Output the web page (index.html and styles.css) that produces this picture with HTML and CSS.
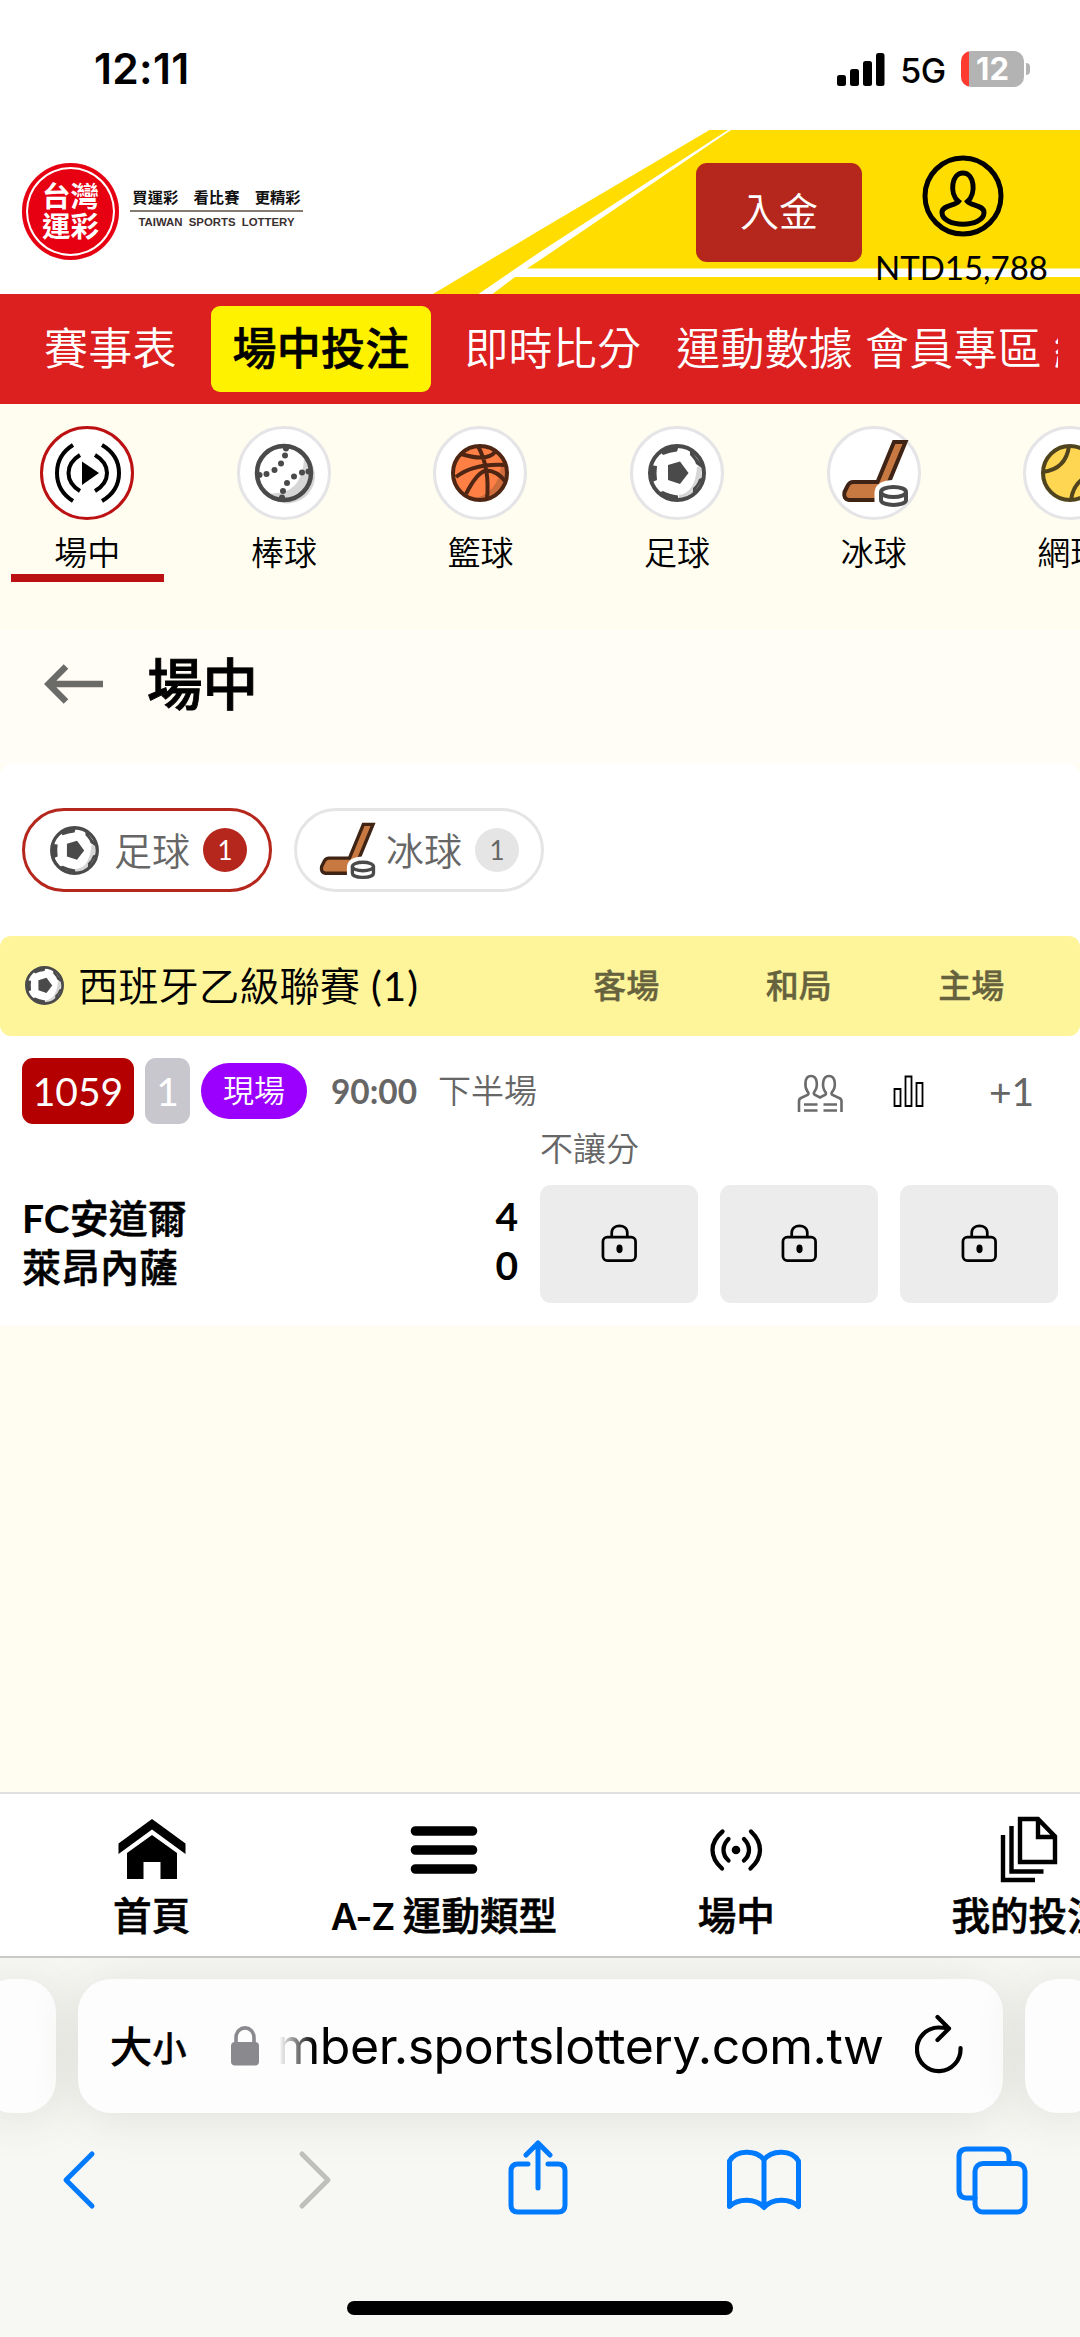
FILE: index.html
```html
<!DOCTYPE html>
<html lang="zh-Hant">
<head>
<meta charset="utf-8">
<title>台灣運彩</title>
<link rel="stylesheet" href="styles.css">
</head>
<body>
<svg class="defs" width="0" height="0" aria-hidden="true">
  <symbol id="soccer" viewBox="-35 -35 70 70">
    <circle r="27" fill="#fff"/>
    <path d="M24 6A25 25 0 0 1 2 25L2 22Q18 20 20 -6L25 -8Z" fill="#d6d6d6"/>
    <g fill="#4a4a4a">
      <path d="M-9 -8L3 -11.5L11.5 0L3 11L-9 7Z"/>
      <path d="M-28 -8L-20 -7Q-21 0 -20 7L-27 10Z"/>
      <path d="M-17 -22L-14 -18Q-7 -21 0 -21.5L2 -28Z"/>
      <path d="M13 -24L13 -18Q18 -13 19 -9L25 -5L28 -4Z"/>
      <path d="M27 4L22 6Q20 12 16 15L16 20L13 26Z"/>
      <path d="M-19 20L-14 18Q-8 21 1 22.5L1 28Z"/>
    </g>
    <circle r="27" fill="none" stroke="#4a4a4a" stroke-width="4"/>
  </symbol>
  <symbol id="baseball" viewBox="-35 -35 70 70">
    <circle r="27" fill="#fff"/>
    <path d="M25-14A27 27 0 0 1-18 20Q18 24 20-14Z" fill="#d6d6d6"/>
    <g fill="#4a4a4a">
      <circle cx="2" cy="-24.500" r="3"/><circle cx="1" cy="-17.500" r="3"/><circle cx="-3" cy="-9.500" r="3"/><circle cx="-9.500" cy="-3" r="3"/><circle cx="-17.500" cy="1" r="3"/><circle cx="-24.500" cy="2" r="3"/>
      <circle cx="-2" cy="24.500" r="3"/><circle cx="-1" cy="18" r="3"/><circle cx="3" cy="10" r="3"/><circle cx="10" cy="3.500" r="3"/><circle cx="18" cy="-.5" r="3"/><circle cx="24.500" cy="-1.500" r="3"/>
    </g>
    <circle r="27" fill="none" stroke="#4a4a4a" stroke-width="4.500"/>
  </symbol>
  <symbol id="basketball" viewBox="-35 -35 70 70">
    <circle r="27" fill="#ff7f45"/>
    <path d="M26-7A27 27 0 0 1-7 26Q18 20 21-7Z" fill="#cf6d3c"/>
    <g fill="none" stroke="#4f2613" stroke-width="4">
      <path d="M-2-27C6-12 9 6 7 26M-24 4Q-6-10 26-8M-19-19Q7-11 15-21M-14 21C-8 9 0-2 7-2.500Q17-2 25 8"/>
      <circle r="27"/>
    </g>
  </symbol>
  <symbol id="hockey" viewBox="-35 -35 70 70">
    <path d="M20-31H31.500L15 9V27H-25Q-31 26-29.500 19L-26 12Q-24 9-21 9H3.500Z" fill="#c87941" stroke="#3f2415" stroke-width="4"/>
    <path d="M.5 30V19Q2 7 20 7L27 12V28Z" fill="#fff"/>
    <path d="M7 19V27C7 33.500 32 33.500 32 27V19" fill="#fff" stroke="#4a4a4a" stroke-width="4"/>
    <ellipse cx="19.500" cy="19" rx="12.500" ry="5" fill="#fff" stroke="#4a4a4a" stroke-width="4"/>
  </symbol>
  <symbol id="tennis" viewBox="-35 -35 70 70">
    <circle r="27" fill="#ffd651"/>
    <path d="M-1-27Q-4-4-27-1M27 1Q4 4 1 27" fill="none" stroke="#4f441d" stroke-width="4"/>
    <circle r="27" fill="none" stroke="#4f441d" stroke-width="4"/>
  </symbol>
  <symbol id="lock" viewBox="0 0 38 40">
    <g fill="none" stroke="#000" stroke-width="2.800"><rect x="2" y="14.500" width="33.500" height="24" rx="4.500"/><path d="M11 14V10C11 .5 27 .5 27 10V14"/></g>
    <ellipse cx="19" cy="26.500" rx="3.200" ry="4.500"/>
  </symbol>
</svg>

<div class="status">
  <time class="clock">12:11</time>
  <svg class="signal" width="48" height="33" viewBox="0 0 48 33"><rect y="22" width="9" height="11" rx="2.500"/><rect x="13" y="16" width="9" height="17" rx="2.500"/><rect x="26" y="8" width="9" height="25" rx="2.500"/><rect x="39" width="8.500" height="33" rx="2.500"/></svg>
  <span class="net">5G</span>
  <span class="battery">12</span><i class="nub"></i>
</div>

<header class="top">
  <svg class="stripes" width="1080" height="164" viewBox="0 0 1080 164">
    <path d="M709.500 0H1080V164H433L540 100Z" fill="#ffdd00"/>
    <path d="M728 0H731L540 130 527 138.500H1080V147H515L492.500 164H478.500L540 122Z" fill="#fff"/>
  </svg>
  <div class="seal"><span>台灣</span><span>運彩</span></div>
  <div class="tagline"><b>買運彩　看比賽　更精彩</b><em>TAIWAN SPORTS LOTTERY</em></div>
  <a class="deposit">入金</a>
  <div class="account">
    <svg width="84" height="84" viewBox="-42 -42 84 84" fill="none" stroke="#000" stroke-width="5"><circle r="38"/><path d="M-4.500 5.500C-14-2-11.500-23 0-23S13.500-2 4.500 5.500C8 10 21 9 21 16.500C21 32-21 32-21 16.500C-21 9-8 10-4.500 5.500Z"/></svg>
    <span>NTD15,788</span>
  </div>
</header>

<nav class="menu">
  <div class="menu-row"><a>賽事表</a><a class="on">場中投注</a><a class="gap">即時比分</a><a class="gap2">運動數據</a><a class="near">會員專區</a><a class="near">線上</a></div>
</nav>

<div class="sports">
  <a class="on"><span class="disc"><svg width="70" height="70" viewBox="-35 -35 70 70" fill="none" stroke="#000" stroke-width="4"><path d="M-14-28Q-30-18-30 0T-14 28M-7-18Q-18.500-11-18.500 0T-7 18M8-18Q20-11 20 0T8 18M15-28Q32-18 32 0T15 28"/><path d="M-5-11.500 12 0-5 12Z" fill="#000" stroke="none"/></svg></span>場中</a>
  <a><span class="disc"><svg width="70" height="70"><use href="#baseball"/></svg></span>棒球</a>
  <a><span class="disc"><svg width="70" height="70"><use href="#basketball"/></svg></span>籃球</a>
  <a><span class="disc"><svg width="70" height="70"><use href="#soccer"/></svg></span>足球</a>
  <a><span class="disc"><svg width="70" height="70"><use href="#hockey"/></svg></span>冰球</a>
  <a><span class="disc"><svg width="70" height="70"><use href="#tennis"/></svg></span>網球</a>
</div>

<div class="heading">
  <svg width="60" height="40" viewBox="0 0 60 40" fill="none" stroke="#6b6b67" stroke-width="6.500"><path d="M22 2.500 4.500 20 22 37.500M5 20H59"/></svg>
  <h1>場中</h1>
</div>

<main>
  <div class="pills">
    <a class="pill on"><svg width="59" height="59"><use href="#soccer"/></svg><span>足球</span><b>1</b></a>
    <a class="pill"><svg width="59" height="59"><use href="#hockey"/></svg><span>冰球</span><b>1</b></a>
  </div>
  <div class="league">
    <svg width="47" height="47"><use href="#soccer"/></svg>
    <h2>西班牙乙級聯賽 <span>(1)</span></h2>
    <div class="cols"><span>客場</span><span>和局</span><span>主場</span></div>
  </div>
  <div class="info">
    <span class="code">1059</span><span class="min">1</span><span class="live">現場</span>
    <b class="time">90:00</b><span class="half">下半場</span>
    <svg class="people" width="46" height="39" viewBox="0 0 46 39" fill="none" stroke="#6b6b6b" stroke-width="2.600"><path d="M2 38V27Q2 24.500 5 23.500L10.500 21Q12.500 19.500 10.500 17.500C7.500 13 7 2 14 2S21 13 17.500 17.500Q16 19.500 18 21L23 23.500 28 21Q30 19.500 28 17.500C25 13 25 2 32 2S39 13 35.500 17.500Q33.500 19.500 35.500 21L41 23.500Q44.500 24.500 44.500 27V38M7 30.500H20.500M7 36.500H20.500M26.500 30.500H40M26.500 36.500H40"/></svg>
    <svg class="stats" width="31" height="33" viewBox="0 0 31 33" fill="none" stroke="#000" stroke-width="1.800"><path d="M1.500 14H7.500V31H1.500ZM12.500 1.500H18.500V31H12.500ZM23.500 8H29.500V31H23.500Z"/></svg>
    <span class="more">+1</span>
  </div>
  <div class="match">
    <div class="teams">
      <p><span><b>FC</b>安道爾</span><b>4</b></p>
      <p><span>萊昂內薩</span><b>0</b></p>
    </div>
    <div class="market">
      <span>不讓分</span>
      <div class="odds"><i><svg width="37" height="39"><use href="#lock"/></svg></i><i><svg width="37" height="39"><use href="#lock"/></svg></i><i><svg width="37" height="39"><use href="#lock"/></svg></i></div>
    </div>
  </div>
</main>

<footer class="tabs">
  <a><svg width="68" height="70" viewBox="-34 -35 68 70"><path d="M-33.500-6.500 0-31 33.500-6.500V4L0-20.500-33.500 4Z"/><path d="M-25 3 0-15 25 3V29H8.500V12H-8.500V29H-25Z"/></svg>首頁</a>
  <a><svg width="68" height="70" viewBox="-34 -35 68 70"><path d="M-28.500-19H28.500M-28.500 0H28.500M-28.500 19H28.500" stroke="#000" stroke-width="9.600" stroke-linecap="round"/></svg><span><b>A-Z</b> 運動類型</span></a>
  <a><svg width="68" height="70" viewBox="-34 -35 68 70" fill="none" stroke="#000" stroke-width="4.300" stroke-linecap="round"><circle r="4.300" fill="#000" stroke="none"/><path d="M-13.500-18.500Q-23.500-10-23.500 0T-14 18.500M-7.500-11Q-12.500-6-12.500 0T-7.500 10.500M8-11Q13-6 13 0T8 10.500M15-18.500Q24-10 24 0T14.500 18.500"/></svg>場中</a>
  <a><svg width="68" height="70" viewBox="-34 -35 68 70" fill="none" stroke="#000" stroke-width="4.400"><path d="M-9-31H9L26-13.500V12H-9ZM9-31V-13H26M-17.500-24V21.500H14.500M-26-15V30H6"/></svg>我的投注</a>
</footer>

<section class="browser">
  <div class="bars">
    <div class="bar side"></div>
    <div class="bar address">
      <span class="big">大</span><span class="small">小</span>
      <svg class="padlock" width="28" height="40" viewBox="0 0 28 40"><rect y="16" width="28" height="23.500" rx="4" fill="#8a898e"/><path d="M5 18V12C5-1.500 23-1.500 23 12V18" fill="none" stroke="#8a898e" stroke-width="3.600"/></svg>
      <span class="url">mber.sportslottery.com.tw</span>
      <svg class="reload" width="48" height="60" viewBox="0 0 48 60" fill="none" stroke="#000" stroke-width="4.200" stroke-linecap="round" stroke-linejoin="round"><path d="M45.500 34A21.800 21.800 0 1 1 23.500 13.500Q28 13.500 34 14.500M22.500 3 34 14.500 22.500 26"/></svg>
    </div>
    <div class="bar side"></div>
  </div>
  <div class="tools">
    <svg width="80" height="80" viewBox="-40 -40 80 80"><path d="M13-26-13 0 13 26"/></svg>
    <svg class="forward" width="80" height="80" viewBox="-40 -40 80 80"><path d="M-13-26 13 0-13 26"/></svg>
    <svg class="share" width="80" height="80" viewBox="-40 -40 80 80"><path d="M-10-16H-20Q-27-16-27-9V25Q-27 32-20 32H20Q27 32 27 25V-9Q27-16 20-16H10M0 8V-36M-12-25 0-37 12-25"/></svg>
    <svg width="80" height="80" viewBox="-40 -40 80 80"><path d="M0-20C-8-31-28-30-34.500-19V26.500C-26 18-8 18 0 27.500C8 18 26 18 34.500 26.500V-19C28-30 8-31 0-20V27"/></svg>
    <svg width="80" height="80" viewBox="-40 -40 80 80"><path d="M-17 18H-25Q-33 18-33 10V-23Q-33-31-25-31H9Q17-31 17-23V-17"/><rect x="-17" y="-16.500" width="50" height="48.500" rx="8"/></svg>
  </div>
  <div class="home"></div>
</section>
</body>
</html>
```
FILE: styles.css
```css
* { box-sizing: border-box; }
html, body { margin: 0; }
body {
  width: 1080px; height: 2337px; overflow: hidden;
  display: flex; flex-direction: column;
  background: #fffdf1; color: #000;
  font-family: Lato, "Noto Sans CJK TC", sans-serif;
  font-size: 33px; line-height: 1;
}
.defs { position: absolute; }
svg { flex: none; display: block; }
h1, h2, p { margin: 0; }

.status {
  flex: none; height: 130px; padding: 8px 50px 0 94px; background: #fff;
  display: flex; align-items: center; font-family: Inter, sans-serif;
}
.clock { font-size: 42.5px; font-weight: 600; margin-right: auto; letter-spacing: .3px; }
.net { font-size: 34px; font-weight: 500; letter-spacing: -.3px; margin: 4px 15px 0 15px; }
.battery {
  width: 63px; height: 36px; border-radius: 10px; color: #fff;
  background: linear-gradient(90deg, #ff3b30 8px, #b3b3b3 8px);
  font-size: 31px; font-weight: 700; line-height: 36px; text-align: center;
}
.nub { width: 4px; height: 12px; margin-left: 2px; background: #b3b3b3; border-radius: 0 6px 6px 0; }

.top {
  flex: none; position: relative; height: 163.5px; padding-left: 22px; background: #fff;
  display: flex; align-items: flex-start;
}
.stripes { position: absolute; inset: 0; }
.top > :not(.stripes) { position: relative; }
.seal {
  width: 97px; height: 97px; margin-top: 33px; padding-top: 18px; border-radius: 50%; background: #e60012;
  box-shadow: inset 0 0 0 4px #e60012, inset 0 0 0 6px #fff;
  color: #fff; font-size: 28.5px; font-weight: 700; line-height: 30px;
  display: flex; flex-direction: column; align-items: center;
}
.tagline { width: 173px; margin: 53px 0 0 11px; text-align: center; white-space: nowrap; color: #3a3030; }
.tagline b { display: block; height: 29px; border-bottom: 2px solid #837b70; font-size: 15.3px; line-height: 29px; color: #111; }
.tagline em { display: block; margin-top: 3px; font: bold 11.4px/14px "Liberation Sans", sans-serif; word-spacing: 3px; }
.deposit {
  width: 166px; height: 99px; margin: 32.500px 0 0 auto; border-radius: 11px; background: #b5271c;
  color: #fff; font-size: 39px; font-weight: 350; line-height: 97px; text-align: center;
}
.account { width: 201px; margin-right: 17px; padding-top: 24px; display: flex; flex-direction: column; align-items: center; }
.account span { font-size: 33px; line-height: 40px; margin: 9px 0 0 -2px; }

.menu { flex: none; height: 110.500px; padding: 12.500px 22px 0 22px; background: #dc1f1f; }
.menu-row { height: 86px; display: flex; overflow: hidden; color: #fff; font-size: 44px; font-weight: 350; letter-spacing: .2px; line-height: 85px; white-space: nowrap; }
.menu a { flex: none; padding: 0 22px; }
.menu a.on { background: #fff200; color: #000; font-weight: 500; -webkit-text-stroke: .6px #000; border-radius: 9px; margin: 0 11px 0 12px; }
.menu a.gap2 { padding: 0 6px; margin-left: 7px; }
.menu a.near { padding: 0 6px; }

.sports { flex: none; height: 226px; padding: 22px 0 0 11px; display: flex; gap: 44px; background: #fffdef; overflow: hidden; }
.sports a { flex: none; width: 152.600px; height: 156px; display: flex; flex-direction: column; align-items: center; font-size: 33px; font-weight: 350; line-height: 48px; }
.sports a.on { border-bottom: 8px solid #bc1113; }
.disc { flex: none; width: 94px; height: 94px; margin-bottom: 8px; border: 3px solid #e5e5e8; border-radius: 50%; background: #fff; display: flex; align-items: center; justify-content: center; }
.on .disc { border-color: #bc1113; }

.heading { flex: none; height: 134px; padding: 24px 0 0 44px; display: flex; align-items: flex-start; gap: 43px; background: #fffdf5; }
.heading svg { margin-top: 10px; }
.heading h1 { font-size: 55.5px; font-weight: 500; line-height: 60px; -webkit-text-stroke: .9px #000; }

main { flex: none; height: 561.500px; background: #fff; border-radius: 11px 11px 0 0; }
.pills { height: 172px; padding: 44px 22px 0; display: flex; gap: 22px; }
.pill { width: 250px; height: 84px; padding: 0 22px 0 20px; border: 3px solid #e5e5e5; border-radius: 42px; display: flex; align-items: center; color: #666; font-size: 38px; }
.pill span { margin-left: 10px; font-weight: 350; }
.pill b { margin-left: auto; width: 44px; height: 44px; border-radius: 50%; background: #e5e5e5; font-size: 26px; font-weight: 400; line-height: 44px; text-align: center; }
.pill.on { border-color: #b5271c; }
.pill.on b { background: #b5271c; color: #fff; }

.league { height: 99.500px; padding-left: 21px; border-radius: 11px; background: #fef59b; display: flex; align-items: center; }
.league h2 { margin-left: 10px; width: 462px; font-size: 40.300px; font-weight: 350; line-height: 60px; white-space: nowrap; }
.league h2 span { font-weight: 400; letter-spacing: 1px; }
.cols { flex: 1; display: flex; color: #66623e; font-weight: 500; -webkit-text-stroke: .4px #66623e; font-size: 33px; line-height: 44px; padding-bottom: 2px; }
.cols span { width: 172.500px; text-align: center; }

.info { height: 96px; padding: 22px 47px 0 22px; display: flex; align-items: flex-start; line-height: 66px; }
.info span { text-align: center; }
.code, .min { height: 66px; border-radius: 11px; color: #fff; font-size: 39px; }
.code { width: 112px; background: #b40000; }
.min { width: 45px; margin-left: 11px; background: #c8c7ce; }
.live { width: 106px; height: 56px; margin: 5.500px 0 0 11px; border-radius: 28px; background: #9b00ff; color: #fff; font-size: 31px; font-weight: 350; line-height: 55px; }
.time { margin-left: 24px; width: 84px; font-size: 33.4px; color: #666; }
.half { margin-left: 23px; color: #666; font-weight: 350; line-height: 65px; }
.people { margin: 16px 0 0 auto; }
.stats { margin: 17px 0 0 50px; }
.more { width: 44px; margin-left: 65px; color: #666; font-size: 39px; }

.match { padding: 0 22px; display: flex; }
.teams { width: 496px; padding-top: 60px; }
.teams p { height: 49.500px; display: flex; justify-content: space-between; font-size: 39px; line-height: 49px; }
.teams p > span { font-weight: 500; -webkit-text-stroke: .5px #000; font-family: "Noto Sans CJK TC", sans-serif; }
.teams b { font-family: Lato, sans-serif; font-weight: 700; -webkit-text-stroke: 0; }
.market { flex: 1; margin-left: 22px; color: #666; }
.market > span { display: block; height: 53px; font-weight: 350; line-height: 33px; }
.odds { display: flex; gap: 22px; }
.odds i { flex: 1; height: 118px; padding-bottom: 2px; border-radius: 11px; background: #ececec; display: flex; align-items: center; justify-content: center; }

.tabs { flex: none; height: 164px; margin-top: auto; padding: 21px 0 0 5.500px; border-top: 2px solid #e0e0e0; background: #fff; display: flex; overflow: hidden; }
.tabs a { flex: none; width: 292.300px; display: flex; flex-direction: column; align-items: center; font-family: "Noto Sans CJK TC", sans-serif; font-size: 38.6px; font-weight: 500; -webkit-text-stroke: .6px #000; line-height: 57px; white-space: nowrap; }
.tabs b { font-family: Inter, sans-serif; font-size: 37px; font-weight: 600; letter-spacing: -1.2px; -webkit-text-stroke: 0; }

.browser { flex: none; height: 381px; border-top: 2px solid #c9c9c9; background: #f7f7f4; overflow: hidden; }
.bars { margin: 21px -22px 0; display: flex; justify-content: center; gap: 22px; }
.bar { height: 134px; border-radius: 33px; background: #fdfdfd; box-shadow: 0 4px 50px rgba(60, 60, 45, .13); }
.side { flex: none; width: 77px; }
.address { flex: none; width: 925px; padding: 0 40px 0 32px; display: flex; align-items: center; }
.big { font: 500 43px/60px "Noto Sans CJK TC", sans-serif; margin-top: -4px; }
.small { font: 500 34px/60px "Noto Sans CJK TC", sans-serif; -webkit-text-stroke: .5px #000; margin-top: 2px; }
.padlock { margin: 0 20px 0 44px; }
.url { flex: 1; height: 70px; overflow: hidden; display: flex; justify-content: flex-end; font: 400 50px/70px Inter, sans-serif; letter-spacing: -.5px; white-space: nowrap; -webkit-mask-image: linear-gradient(90deg, transparent, #000 36px); mask-image: linear-gradient(90deg, transparent, #000 36px); }
.reload { margin: -4px 0 0 31px; }
.tools { margin-top: 27px; padding: 0 48px 0 39px; height: 80px; display: flex; justify-content: space-between; }
.tools svg { fill: none; stroke: #007aff; stroke-width: 5; stroke-linecap: round; stroke-linejoin: round; }
.tools .forward { stroke: #bfbfbd; margin: 0 -7.5px 0 7.5px; }
.tools .share { margin: 0 -2.5px 0 2.5px; }
.home { width: 386px; height: 14px; margin: 81px auto 0; border-radius: 7px; background: #000; }
```
